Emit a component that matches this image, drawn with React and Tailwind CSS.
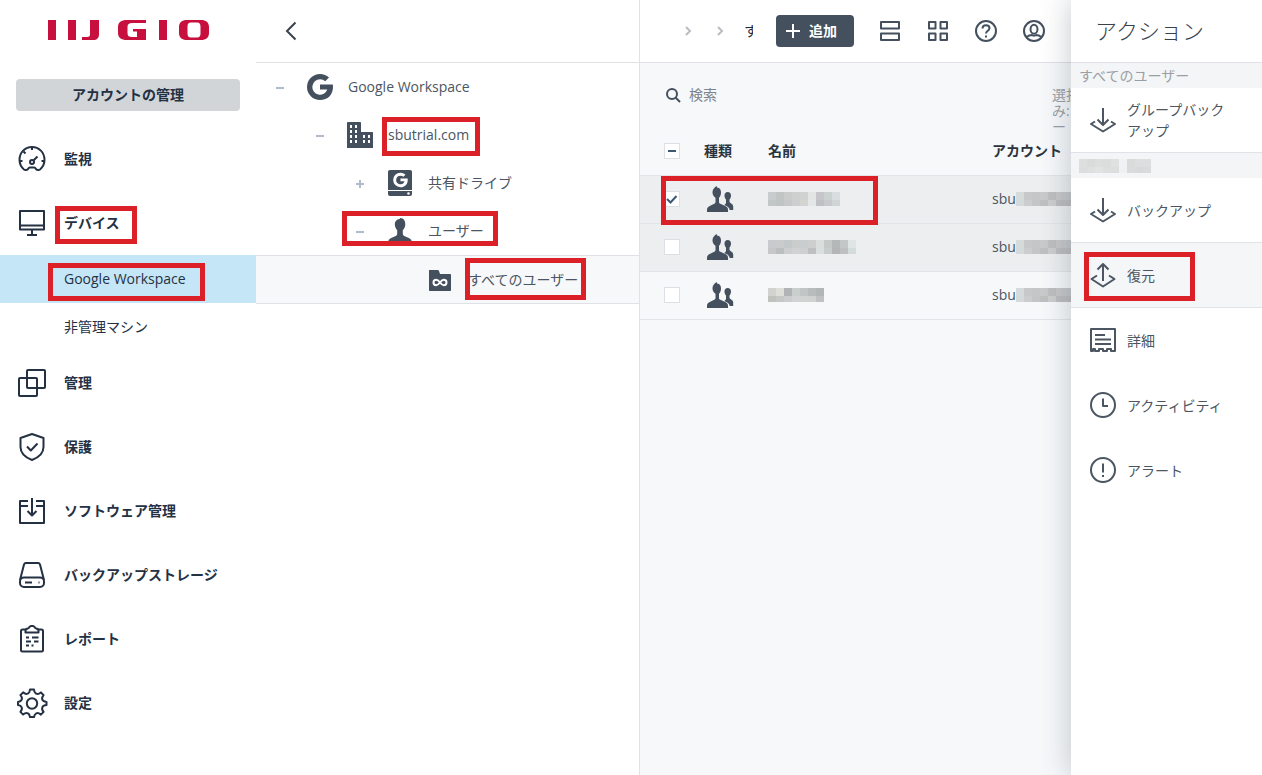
const navItems = [
  { label: '監視', icon: 'gauge' },
  {
    label: 'デバイス',
    icon: 'monitor',
    mark: 'left-[55px] top-[15px] w-[82px] h-[38px]',
    children: [
      { label: 'Google Workspace', active: true, mark: 'left-12 top-2 w-[157px] h-[38px]' },
      { label: '非管理マシン' },
    ],
  },
  { label: '管理', icon: 'squares' },
  { label: '保護', icon: 'shield' },
  { label: 'ソフトウェア管理', icon: 'download' },
  { label: 'バックアップストレージ', icon: 'drive' },
  { label: 'レポート', icon: 'clipboard' },
  { label: '設定', icon: 'gear' },
];

const treeItems = [
  { label: 'Google Workspace', indent: 'pl-4', toggle: 'minus', icon: 'google' },
  { label: 'sbutrial.com', indent: 'pl-14', toggle: 'minus', icon: 'building', mark: 'left-[126px] top-[6px] w-[98px] h-[39px]' },
  { label: '共有ドライブ', indent: 'pl-24', toggle: 'plus', icon: 'sharedDrive' },
  { label: 'ユーザー', indent: 'pl-24', toggle: 'minus', icon: 'user', mark: 'left-[86px] top-1 w-[156px] h-[35px]' },
  { label: 'すべてのユーザー', indent: 'pl-[136px]', icon: 'folder', active: true, mark: 'left-[209px] top-[2px] w-[121px] h-[42px]' },
];

const rows = [
  {
    checked: true,
    selected: true,
    mark: true,
    name: [
      ['#c9cccc', '#c1c6c5', '#c9cccb', '#cdd0cf', '#d0d1d1', '#e3e5e5', '#c6c5ca', '#cbd0d0', '#d9dddf'],
      ['#c2c7c6', '#bfc5c4', '#c5c9ca', '#cccfd0', '#d3d4cf', '#e4e7e7', '#c0bfc4', '#c7c9cb', '#cfd5d5'],
    ],
  },
  {
    selected: true,
    name: [
      ['#c9cacd', '#c9cbcc', '#c3c9c9', '#c9cecd', '#cacdcd', '#cdcfcf', '#dadedd', '#c5c9c8', '#b5b8b8', '#c4c7c7', '#dfe5e5'],
      ['#c7c7ca', '#bcbfbf', '#cbcfcf', '#d0d3d3', '#cdd0d0', '#bdc0c0', '#d9dede', '#c8cccc', '#b3b6b6', '#bcc0c0', '#d4dcdb'],
    ],
  },
  {
    name: [
      ['#d2d3cf', '#dddfd8', '#b1b4b4', '#c8cfcd', '#c1c5c5', '#b9bcbc', '#b3b6b6'],
      ['#bfc2bd', '#c5c8c6', '#cbcece', '#d0d4d3', '#cfd4d3', '#ced3d2', '#bfc2c2'],
    ],
  },
];

const accountMosaic = [
  ['#d5dbda', '#c6c8c9', '#c5c6c7', '#c9cacb', '#bdbfc0', '#c6c6c8', '#c6c7cb'],
  ['#d4dad9', '#cccdce', '#c4c5c6', '#bfc1c1', '#cccdcd', '#bbbcbf', '#bcbdc0'],
];

const labelMosaic = [
  ['#dddfdf', '#d9dbdb', '#dcdede', '#dbdddd', '#dfe1e1', '#f0f2f3', '#d8dbda', '#dcdedf', '#dcdfde'],
  ['#dcdede', '#dee0e0', '#e1e3e3', '#dddfdf', '#dcdede', '#eff1f2', '#dadcdb', '#d7dad9', '#d9dbdc'],
];

// Outline icons, all drawn on a 32 unit grid
const icons = {
  gauge: (
    <>
      <path d="M8 26.5c-2.800-2.400-4.500-6-4.500-9.700C3.500 9.500 9 4 16 4s12.500 5.500 12.500 12.800c0 3.700-1.700 7.300-4.500 9.700-1 .8-3.400.8-4.200-.8-.4-.8-.8-1.200-1.600-1.200h-4.400c-.8 0-1.200.4-1.600 1.200-.8 1.600-3.200 1.600-4.200.8z" />
      <path d="M16 4v3M7.500 8.500l2 2M3.500 18h3M25.500 18h3M17.700 17.300l3.800-3.800" />
      <circle cx="16" cy="19" r="2" />
    </>
  ),
  monitor: <path d="M4 4h24v18.500H4zM4 18.500h24M16 22.500V28M11 28h10" />,
  squares: (
    <>
      <rect x="11" y="3" width="18" height="18" rx="1" />
      <rect x="3" y="11" width="18" height="18" rx="1" />
    </>
  ),
  shield: <path d="M16 3l11.500 4v9c0 6.500-5 10.500-11.500 13C9.500 26.500 4.500 22.500 4.500 16V7zM11 15.500l3.800 4 6.700-7" />,
  download: <path d="M12 6H4v22h24V6h-8M4 11h8M20 11h8M16 3v17.500M11.500 16l4.500 4.500 4.500-4.500" />,
  drive: (
    <>
      <path d="M4 21L8 5.500C8.300 4.500 9 4 10 4h12c1 0 1.700.5 2 1.500L28 21" />
      <rect x="4" y="18.500" width="24" height="9.500" rx="4" />
      <path d="M9 23.500h7M22.500 23.500h1" />
    </>
  ),
  clipboard: (
    <>
      <path d="M10 6.500H6.500c-1 0-1.500.5-1.500 1.500v19c0 1 .5 1.500 1.500 1.500h19c1 0 1.500-.5 1.500-1.500V8c0-1-.5-1.500-1.500-1.500H22" />
      <path d="M9.500 9.500V8c0-1.500 1-2.500 2.500-2.500 1 0 1.500-2.500 3-2.500h2c1.500 0 2 2.500 3 2.500 1.500 0 2.500 1 2.500 2.500v1.500z" />
      <path d="M10 14.500h3M16 14.500h6.500M10 18.500h5M18 18.500h4.500M10 22.500h3M15.500 22.500h2" />
    </>
  ),
  gear: (
    <>
      <path d="M14 2.500h4c.3 2.500 1 3.700 2.300 4.200 1.400.6 2.700.3 4.600-1.300l2.700 2.800c-1.600 1.900-1.900 3.200-1.300 4.500.6 1.400 1.700 2 4.200 2.300v3c-2.500.3-3.700 1-4.200 2.300-.6 1.400-.3 2.700 1.300 4.600l-2.700 2.700c-2-1.600-3.200-1.900-4.600-1.300-1.400.6-2 1.700-2.300 3.700h-4c-.3-2-1-3.200-2.300-3.700-1.400-.6-2.700-.3-4.600 1.300l-2.700-2.700c1.600-2 1.900-3.200 1.300-4.600-.6-1.400-1.700-2-3.700-2.300v-3c2-.3 3.200-1 3.700-2.300.6-1.400.3-2.700-1.300-4.500l2.700-2.800c2 1.600 3.200 1.900 4.600 1.300 1.400-.6 2-1.700 2.300-4.200z" />
      <circle cx="16" cy="16.500" r="5.200" />
    </>
  ),
  backup: <path d="M16 4v17M10.500 15.500L16 21l5.500-5.500M8 17.500l-4 2.500 12 7.500L28 20l-4-2.500" />,
  restore: <path d="M16 22V5M10.500 10.500L16 5l5.500 5.500M10 16.500L4.500 20 16 27.500 27.500 20 22 16.500" />,
  details: <path d="M4 5h24v22h-4v-2h-4v2h-4v-2h-4v2H8v-2H6v2H4zM8 11h10M8 15.500h16M8 20h16" />,
  clock: (
    <>
      <circle cx="16" cy="16" r="12" />
      <path d="M16 9.500V17h5" />
    </>
  ),
  alert: (
    <>
      <circle cx="16" cy="16" r="12" />
      <path d="M16 9.500v9M16 21v2" />
    </>
  ),
  listView: <path d="M7 7h18v6.500H7zM7 18.500h18V25H7z" />,
  gridView: <path d="M7 7h6.500v6.500H7zM18.500 7H25v6.500h-6.500zM7 18.500h6.500V25H7zM18.500 18.500H25V25h-6.500z" />,
  help: (
    <>
      <circle cx="16" cy="16" r="10" />
      <path d="M12.500 13.500c0-2 1.500-3.300 3.500-3.300s3.500 1.300 3.500 3.100c0 2.500-3.500 2.500-3.500 5.200M16 20.500v2" />
    </>
  ),
  account: (
    <>
      <circle cx="16" cy="16" r="10" />
      <ellipse cx="16" cy="14.300" rx="3.500" ry="4.500" />
      <path d="M8.500 22c2-1.500 4-2 5.500-2 .8 1 3.200 1 4 0 1.500 0 3.500.5 5.500 2" />
    </>
  ),
};

const googleG =
  'M16 3c3.500 0 6.600 1.300 9 3.500l-3.800 3.700A7.500 7.500 0 0 0 16 8.300a7.700 7.700 0 1 0 7.300 10.200H16v-5h12.800c.2.800.2 1.600.2 2.500 0 7.700-5.200 13-13 13a13 13 0 0 1 0-26z';

const glyphs = {
  google: <path d={googleG} />,
  building: (
    <path
      fillRule="evenodd"
      d="M4 3h12c.6 0 1 .4 1 1v9h11c.6 0 1 .4 1 1v15H3V4c0-.6.400-1 1-1zM6 6v3h2V6zm5 0v3h2V6zM6 11v3h2v-3zm5 0v3h2v-3zM6 16v3h2v-3zm5 0v3h2v-3zM6 21v3h2v-3zm5 0v3h2v-3zM19 16v3h2v-3zm5 0v3h2v-3zM19 21v3h2v-3zm5 0v3h2v-3z"
    />
  ),
  sharedDrive: (
    <>
      <path d="M6 3h20c1.200 0 2 .8 2 2v18H4V5c0-1.200.8-2 2-2z" />
      <path fillRule="evenodd" d="M4 24h24v3c0 1.200-.8 2-2 2H6c-1.200 0-2-.8-2-2zM24.500 25.200a1.300 1.300 0 1 0 0 2.600 1.300 1.300 0 0 0 0-2.600z" />
      <path fill="#fff" transform="translate(7.500 4) scale(.56)" d={googleG} />
    </>
  ),
  user: (
    <path d="M15.500 4l.8-1c3.400.3 5 2.600 5 6 0 2.700-1 4.800-2.500 6.300v3.500c0 1 .5 1.700 1.500 2.100l4.500 2c1.800.8 3.200 2.300 3.200 4.600V29H4v-1.500c0-2.300 1.400-3.800 3.200-4.600l4.500-2c1-.4 1.500-1.100 1.500-2.100v-3.500C11.800 13.800 10.800 11.700 10.800 9c0-2.700 1.700-4.500 4.700-5z" />
  ),
  users: (
    <>
      <path d="M12.500 3l.7 1.500c2.600.3 3.800 2.300 3.800 5 0 2.200-.7 3.900-2 5.300v4c0 1 .4 1.600 1.300 2l5 2.200c1.700.7 2.700 2 2.700 3.700V29H3v-2.300c0-1.700 1-3 2.700-3.700l4.500-2.200c.9-.4 1.300-1 1.300-2v-4c-1.800-1.400-3-3.100-3-5.300 0-2.700 1.200-4.700 4-6.500z" />
      <path d="M20.500 12.500c0-2.300 1.200-3.500 3.200-3.500S27 10.200 27 12.500c0 1.700-.6 3-1.500 4v2c0 .7.300 1.100.9 1.400 1.700.8 2.800 1.900 2.800 3.600V27h-3.400c-.6-2.500-2.300-3.800-5.600-5 1.300-.7 1.800-1.500 1.800-2.500v-3c-.9-1-1.500-2.300-1.500-4z" />
    </>
  ),
  folder: (
    <>
      <path d="M5 6h8.500c.8 0 1.300.4 1.500 1l1 3h10c.6 0 1 .4 1 1v15c0 .6-.4 1-1 1H6c-.6 0-1-.4-1-1z" />
      <path fill="none" stroke="#fff" strokeWidth="2" d="M16 18.500c-1.300-1.700-2.300-2.700-3.800-2.700a2.700 2.700 0 0 0 0 5.400c1.500 0 2.500-1 3.800-2.700s2.300-2.700 3.800-2.700a2.700 2.700 0 0 1 0 5.400c-1.500 0-2.500-1-3.800-2.700z" />
    </>
  ),
};

function Icon({ name }) {
  return (
    <svg viewBox="0 0 32 32" className="w-8 h-8 shrink-0" fill="none" stroke="currentColor" strokeWidth="2" strokeLinejoin="round" aria-hidden="true">
      {icons[name]}
    </svg>
  );
}

function Glyph({ name }) {
  return (
    <svg viewBox="0 0 32 32" className="w-8 h-8 shrink-0 text-[#44505e]" fill="currentColor" aria-hidden="true">
      {glyphs[name]}
    </svg>
  );
}

function Mark({ className }) {
  return <span className={`absolute z-10 border-5 border-[#dc2028] pointer-events-none ${className}`} />;
}

// Pixelated stand-in for a redacted value
function Mosaic({ cells, height = 14 }) {
  const width = cells[0].length * 8;
  return (
    <svg width={width} height={height} className="shrink-0" shapeRendering="crispEdges" aria-hidden="true">
      {cells.map((line, y) => line.map((fill, x) => <rect key={`${x}-${y}`} x={x * 8} y={y * 8} width="8" height="8" fill={fill} />))}
    </svg>
  );
}

function Logo() {
  return (
    <svg viewBox="0 0 162 22" className="w-[162px] h-[22px]" fill="#c8103e" role="img" aria-label="IIJ GIO">
      <path d="M0 0h8v20H0zM20 0h8v20h-8zM42 0h9v14c0 4-2 6-6 6H34v-3h5c2 0 3-.8 3-2.500z" />
      <path d="M98 0v3H84c-3 0-4.500 1-4.500 4v6c0 3 1.500 4 4.500 4h5v-5.500h-4V9h13v11H79c-6 0-9-2.500-9-7V7c0-4.500 3-7 9-7z" />
      <path d="M111 0h8v20h-8z" />
      <path fillRule="evenodd" d="M139 0h14c5 0 8 2.500 8 7v6c0 4.500-3 7-8 7h-14c-5 0-8-2.500-8-7V7c0-4.500 3-7 8-7zM143 2.500c-2.500 0-3.500 1.500-3.500 4v7c0 2.500 1 4 3.500 4h6c2.500 0 3.500-1.500 3.500-4v-7c0-2.500-1-4-3.500-4z" />
    </svg>
  );
}

function Sidebar() {
  return (
    <nav className="w-64 shrink-0 text-[#243143]">
      <div className="h-[63px] pl-12 pt-5">
        <Logo />
      </div>
      <div className="px-4 py-4">
        <button className="w-full h-8 rounded-sm bg-[#d2d5d8] font-bold">アカウントの管理</button>
      </div>
      <ul>
        {navItems.map((item) => (
          <li key={item.label}>
            <a href="#" className="relative flex items-center gap-4 h-16 pl-4 font-bold">
              <Icon name={item.icon} />
              {item.label}
              {item.mark && <Mark className={item.mark} />}
            </a>
            {item.children?.map((child) => (
              <a key={child.label} href="#" className={`relative flex items-center h-12 pl-16 ${child.active ? 'bg-[#c4e6f7]' : ''}`}>
                {child.label}
                {child.mark && <Mark className={child.mark} />}
              </a>
            ))}
          </li>
        ))}
      </ul>
    </nav>
  );
}

function Tree() {
  return (
    <section className="w-96 shrink-0 border-r border-[#dfe3e7]">
      <header className="flex items-center h-[63px] pl-5 border-b border-[#dfe1e4]">
        <button aria-label="戻る" className="text-[#38424d]">
          <svg viewBox="0 0 32 32" className="w-8 h-8" fill="none" stroke="currentColor" strokeWidth="2">
            <path d="M19.500 7.500L11 16l8.500 8.500" />
          </svg>
        </button>
      </header>
      <ul className="text-[#4b5662]">
        {treeItems.map((item) => (
          <li
            key={item.label}
            className={`relative flex items-center ${item.indent} ${item.active ? 'h-[49px] border-y border-[#dfe3e7] bg-[#f6f8f9]' : 'h-12'}`}
          >
            {item.toggle ? (
              <button aria-label="開閉" className="w-4 h-4 text-[#b0bccb]">
                <svg viewBox="0 0 16 16" className="w-4 h-4" fill="none" stroke="currentColor" strokeWidth="2">
                  <path d={item.toggle === 'plus' ? 'M4 9h8M8 5v8' : 'M4 9h8'} />
                </svg>
              </button>
            ) : (
              <span className="w-4" />
            )}
            <a href="#" className="flex items-center gap-3 ml-4">
              <Glyph name={item.icon} />
              {item.label}
            </a>
            {item.mark && <Mark className={item.mark} />}
          </li>
        ))}
      </ul>
    </section>
  );
}

function Checkbox({ label, checked, mixed }) {
  return (
    <label className="relative block w-4 h-4">
      <input type="checkbox" defaultChecked={checked} aria-label={label} className="block w-4 h-4 appearance-none border border-[#dcdfe3] bg-white" />
      {(checked || mixed) && (
        <svg viewBox="0 0 16 16" className="absolute inset-0 w-4 h-4 text-[#3f5878]" fill="none" stroke="currentColor" strokeWidth="2">
          <path d={mixed ? 'M4 8h8' : 'M3 8l3.500 3.500L12.500 5'} />
        </svg>
      )}
    </label>
  );
}

function Toolbar() {
  return (
    <header className="flex items-center h-[63px] pl-10 border-b border-[#dfe1e4] bg-white text-[#44505e]">
      {[0, 1].map((i) => (
        <svg key={i} viewBox="0 0 16 16" className="w-4 h-4 mr-4 shrink-0 text-[#b9bdc2]" fill="none" stroke="currentColor" strokeWidth="2">
          <path d="M6 4l4 4-4 4" />
        </svg>
      ))}
      <span className="w-[9px] shrink-0 overflow-hidden whitespace-nowrap text-gray-800">す</span>
      <button className="flex items-center gap-2 h-8 w-[78px] shrink-0 ml-[23px] mr-5 pl-[9px] rounded-sm bg-[#44505e] text-white font-bold">
        <svg viewBox="0 0 16 16" className="w-4 h-4" fill="none" stroke="currentColor" strokeWidth="2">
          <path d="M1 8h14M8 1v14" />
        </svg>
        追加
      </button>
      <div className="flex gap-4 shrink-0">
        <button aria-label="リスト表示"><Icon name="listView" /></button>
        <button aria-label="グリッド表示"><Icon name="gridView" /></button>
        <button aria-label="ヘルプ"><Icon name="help" /></button>
        <button aria-label="アカウント"><Icon name="account" /></button>
      </div>
    </header>
  );
}

function Devices() {
  return (
    <main className="flex-1 min-w-0 overflow-hidden bg-[#f6f8fa]">
      <Toolbar />
      <div className="flex items-start justify-between h-16 pl-[25px]">
        <label className="flex items-center gap-2 h-16 text-[#44505e]">
          <svg viewBox="0 0 16 16" className="w-4 h-4" fill="none" stroke="currentColor" strokeWidth="2">
            <circle cx="7" cy="7" r="5" />
            <path d="M10.500 10.500L15 15" />
          </svg>
          <input type="search" placeholder="検索" className="w-40 placeholder:text-[#7d848b]" />
        </label>
        <div className="w-[19px] pt-6 leading-4 overflow-hidden whitespace-nowrap text-[#9a9fa5]">
          選択
          <br />
          み:
          <br />
          ー
        </div>
      </div>
      <table className="w-full table-fixed text-left">
        <thead>
          <tr className="h-12 text-[#2b333c]">
            <th className="w-16 pl-6">
              <Checkbox label="すべて選択" mixed />
            </th>
            <th className="w-16">種類</th>
            <th className="w-56">名前</th>
            <th className="whitespace-nowrap">アカウント</th>
          </tr>
        </thead>
        <tbody>
          {rows.map((row, i) => (
            <tr key={i} className={`h-12 border-y border-[#e2e5e8] text-[#4b5662] ${row.selected ? 'bg-[#eceeef]' : ''}`}>
              <td className="relative pl-6">
                <Checkbox label="選択" checked={row.checked} />
                {row.mark && <Mark className="left-[21px] top-0 w-[217px] h-[49px]" />}
              </td>
              <td>
                <Glyph name="users" />
              </td>
              <td>
                <Mosaic cells={row.name} />
              </td>
              <td>
                <div className="flex items-center overflow-hidden">
                  sbu
                  <Mosaic cells={accountMosaic} />
                </div>
              </td>
            </tr>
          ))}
        </tbody>
      </table>
    </main>
  );
}

function Action({ icon, active, divided, mark, children }) {
  return (
    <button
      className={`relative flex items-center gap-2 w-full h-[65px] pl-4 pr-8 border-b text-left leading-[21px] ${divided ? 'border-[#dfe3e7]' : 'border-transparent'} ${active ? 'bg-[#f4f6f8]' : ''}`}
    >
      <Icon name={icon} />
      {children}
      {mark && <Mark className={mark} />}
    </button>
  );
}

function Actions() {
  return (
    <aside className="relative z-20 w-[191px] shrink-0 bg-white text-[#4b5662] shadow-[0_0_28px_rgba(60,70,85,0.3)]">
      <header className="flex items-center h-[63px] pl-6 border-b border-[#dfe1e4]">
        <h2 className="text-[22px] font-light text-[#38424d]">アクション</h2>
      </header>
      <div className="flex items-center h-[25px] pl-2 bg-[#f3f5f7] text-[#9a9fa5]">すべてのユーザー</div>
      <Action icon="backup" divided>グループバックアップ</Action>
      <div className="flex items-center h-[25px] pl-2 bg-[#f3f5f7]">
        <Mosaic cells={labelMosaic} />
      </div>
      <Action icon="backup" divided>バックアップ</Action>
      <Action icon="restore" divided active mark="left-[13px] top-[9px] w-[111px] h-[49px]">復元</Action>
      <Action icon="details">詳細</Action>
      <Action icon="clock">アクティビティ</Action>
      <Action icon="alert">アラート</Action>
    </aside>
  );
}

export default function App() {
  return (
    <div className="flex min-h-screen overflow-hidden bg-white text-sm font-['Open_Sans','Noto_Sans_CJK_JP',sans-serif]">
      <Sidebar />
      <Tree />
      <Devices />
      <Actions />
    </div>
  );
}
